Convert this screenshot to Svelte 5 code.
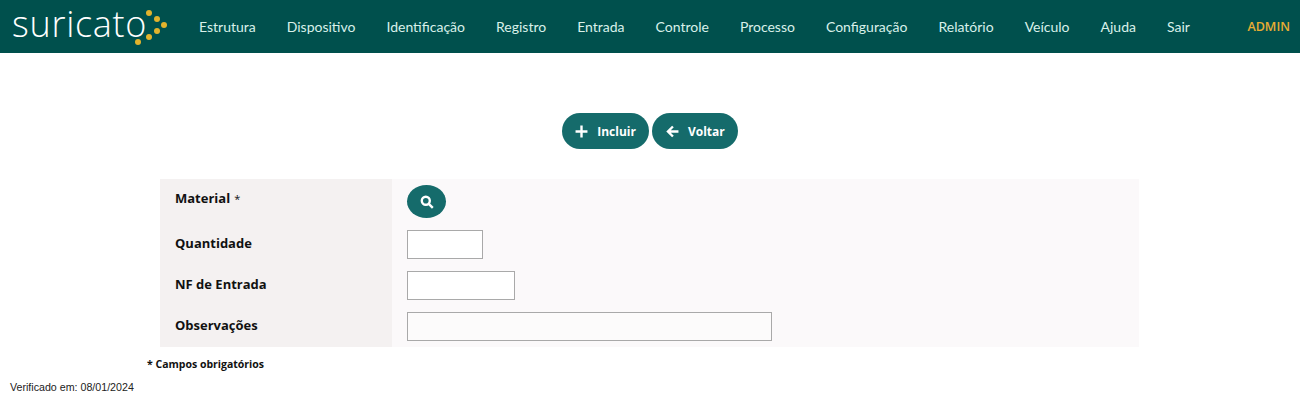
<script>
	const menu = ["Estrutura", "Dispositivo", "Identificação", "Registro", "Entrada", "Controle", "Processo", "Configuração", "Relatório", "Veículo", "Ajuda", "Sair"];
	const dots = [[149, 13], [157, 19], [164, 25], [157, 31], [149, 37], [138, 42]];
</script>

<header class="navbar">
	<a class="logo" href="#top">
		<span>suricato</span>
		<svg viewBox="0 0 170 53" aria-hidden="true">
			{#each dots as [cx, cy]}
				<circle {cx} {cy} r="3" fill="#e3b32c" />
			{/each}
		</svg>
	</a>
	<nav>
		{#each menu as item}
			<a href="#top">{item}</a>
		{/each}
	</nav>
	<span class="user">ADMIN</span>
</header>

<main>
	<div class="actions">
		<button class="btn">
			<svg viewBox="0 0 12 12"><path d="M6 .5v11M.5 6h11" /></svg>
			Incluir
		</button>
		<button class="btn back">
			<svg viewBox="0 0 12 12"><path d="M11.5 6H2M6.4 1.4 1.8 6l4.6 4.6" /></svg>
			Voltar
		</button>
	</div>

	<div class="form">
		<div class="label material">Material <small>*</small></div>
		<div class="field material">
			<button class="search" aria-label="Pesquisar">
				<svg viewBox="0 0 14 14"><circle cx="5.8" cy="5.8" r="4" /><path d="m8.8 8.8 4 4" /></svg>
			</button>
		</div>
		<div class="label">Quantidade</div>
		<div class="field"><input class="qty" /></div>
		<div class="label">NF de Entrada</div>
		<div class="field"><input class="nf" /></div>
		<div class="label">Observações</div>
		<div class="field"><input class="obs" /></div>
	</div>

	<p class="required">* Campos obrigatórios</p>
	<p class="verified">Verificado em: 08/01/2024</p>
</main>

<style>
	:global(body) {
		background: #fff;
		font-family: "Open Sans", "Noto Sans", sans-serif;
	}

	.navbar {
		display: flex;
		align-items: center;
		height: 53px;
		background: #00504d;
		color: #d9f0ea;
	}

	.logo {
		position: relative;
		display: block;
		width: 170px;
		height: 53px;
		flex: none;
		color: #fff;
		text-decoration: none;
	}
	.logo span {
		display: block;
		padding-left: 12px;
		font-weight: 300;
		font-size: 36px;
		line-height: 47px;
		letter-spacing: 0.7px;
	}
	.logo svg {
		position: absolute;
		left: 0;
		top: 0;
		width: 170px;
		height: 53px;
	}

	nav {
		display: flex;
		gap: 31px;
		margin-left: 29px;
		font-family: "Lato", sans-serif;
		font-size: 14px;
	}
	nav a {
		color: inherit;
		text-decoration: none;
	}

	.user {
		margin-left: auto;
		padding-right: 10px;
		color: #e8ad33;
		font-size: 12.5px;
		font-weight: 600;
	}

	.actions {
		display: flex;
		justify-content: center;
		gap: 3px;
		margin-top: 60px;
	}

	.btn {
		display: flex;
		align-items: center;
		gap: 9px;
		height: 36px;
		padding: 0 13.5px;
		border: none;
		border-radius: 18px;
		background: #156b6b;
		color: #fff;
		font: 700 12px "Open Sans", sans-serif;
	}
	.btn svg {
		width: 13px;
		height: 13px;
		fill: none;
		stroke: #fff;
		stroke-width: 2.2;
	}

	.form {
		display: grid;
		grid-template-columns: 232px 747px;
		width: 979px;
		margin: 30px 0 0 160px;
		font-size: 13px;
		font-weight: 700;
		color: #111;
	}
	.label {
		display: flex;
		align-items: center;
		gap: 4px;
		box-sizing: border-box;
		height: 41px;
		padding: 0 0 3px 15px;
		background: #f4f1f1;
	}
	.label small {
		font-size: 11px;
		font-weight: 400;
	}
	.label.material {
		height: 45px;
		padding-bottom: 7px;
	}
	.field {
		display: flex;
		align-items: center;
		height: 41px;
		padding-left: 15px;
		background: #fbf9fa;
	}
	.field.material {
		height: 45px;
	}

	.search {
		display: flex;
		align-items: center;
		justify-content: center;
		width: 39px;
		height: 33px;
		padding: 0;
		border: none;
		border-radius: 50%;
		background: #156b6b;
	}
	.search svg {
		width: 14px;
		height: 14px;
		fill: none;
		stroke: #fff;
		stroke-width: 2.4;
	}

	input {
		box-sizing: border-box;
		height: 29px;
		padding: 0;
		border: 1px solid #a9a9a9;
		background: #fff;
	}
	.qty {
		width: 76px;
	}
	.nf {
		width: 108px;
	}
	.obs {
		width: 365px;
		background: #fcfbfb;
	}

	.required {
		margin: 10px 0 0 147px;
		font-size: 10.5px;
		font-weight: 700;
		line-height: 15px;
		color: #111;
	}
	.verified {
		margin: 9px 0 0 10px;
		font: 10.67px/12px "Liberation Sans", Arial, sans-serif;
		color: #222;
	}
</style>
